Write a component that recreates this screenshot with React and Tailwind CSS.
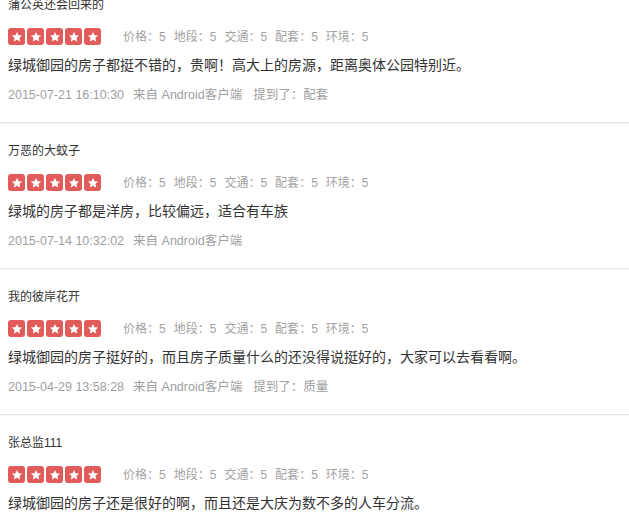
import React from 'react';

const reviews = [
  {
    name: '蒲公英还会回来的',
    content: '绿城御园的房子都挺不错的，贵啊！高大上的房源，距离奥体公园特别近。',
    time: '2015-07-21 16:10:30',
    mention: '配套',
  },
  {
    name: '万恶的大蚊子',
    content: '绿城的房子都是洋房，比较偏远，适合有车族',
    time: '2015-07-14 10:32:02',
  },
  {
    name: '我的彼岸花开',
    content: '绿城御园的房子挺好的，而且房子质量什么的还没得说挺好的，大家可以去看看啊。',
    time: '2015-04-29 13:58:28',
    mention: '质量',
  },
  {
    name: '张总监111',
    content: '绿城御园的房子还是很好的啊，而且还是大庆为数不多的人车分流。',
    time: '2015-04-20 09:12:45',
  },
];

const scores = ['价格', '地段', '交通', '配套', '环境'];

const Star = () => (
  <span className="w-[17px] h-[17px] rounded-[3px] bg-[#e25b5b] flex items-center justify-center">
    <svg width="12" height="12" viewBox="0 0 24 24">
      <path
        d="M12 1.8l3.1 6.6 7.1.8-5.3 4.9 1.5 7.1L12 17.6l-6.4 3.6 1.5-7.1-5.3-4.9 7.1-.8z"
        fill="#fff"
      />
    </svg>
  </span>
);

const ReviewItem = ({ review, first }) => (
  <div className={`px-2 pt-[19px] pb-[17px] border-b border-[#e6e6e6] shadow-[0_1px_1px_rgba(0,0,0,0.03)] ${first ? '-mt-[23px]' : ''}`}>
    <div className="text-[12px] leading-[18px] text-[#333]">{review.name}</div>
    <div className="mt-[14px] h-[17px] flex items-center">
      <div className="flex gap-[2px]">
        {[0, 1, 2, 3, 4].map((i) => (
          <Star key={i} />
        ))}
      </div>
      <div className="ml-[22px] flex gap-[8px] text-[12px] text-[#a3a3a3]">
        {scores.map((s) => (
          <span key={s}>{s}：5</span>
        ))}
      </div>
    </div>
    <p className="mt-[10px] text-[14px] leading-[20px] text-[#333]">{review.content}</p>
    <div className="mt-[10px] text-[12.5px] leading-[20px] text-[#a0a0a0] flex">
      <span>{review.time}</span>
      <span className="ml-[9px]">来自 Android客户端</span>
      {review.mention && (
        <span className="ml-[11px]">提到了：{review.mention}</span>
      )}
    </div>
  </div>
);

export default function App() {
  return (
    <div
      className="w-[629px] h-[523px] overflow-hidden bg-white"
      style={{ fontFamily: '"Liberation Sans", "Noto Sans CJK SC", sans-serif' }}
    >
      {reviews.map((r, i) => (
        <ReviewItem key={i} review={r} first={i === 0} />
      ))}
    </div>
  );
}
